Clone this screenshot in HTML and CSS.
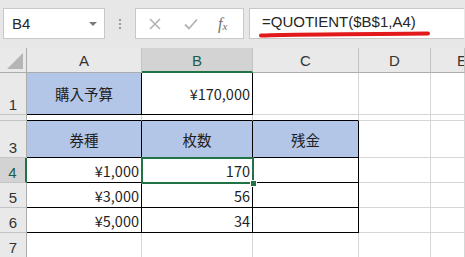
FILE: index.html
```html
<!DOCTYPE html>
<html>
<head>
<meta charset="utf-8">
<link rel="stylesheet" href="styles.css">
</head>
<body>
<div class="toolbar">
  <div class="namebox"><span class="name">B4</span><span class="drop"></span></div>
  <div class="grip"><i></i><i></i><i></i></div>
  <div class="iconbox">
    <svg class="ic" width="14" height="14" viewBox="0 0 14 14"><path d="M2 2L12 12M12 2L2 12" stroke="#b3b3b3" stroke-width="1.6" fill="none"/></svg>
    <svg class="ic" width="16" height="14" viewBox="0 0 16 14"><path d="M2 7.5L6 11.5L14 2.5" stroke="#b3b3b3" stroke-width="1.8" fill="none"/></svg>
    <span class="fx">f<sub>x</sub></span>
  </div>
  <div class="formula">
    <span class="ftext">=QUOTIENT($B$1,A4)</span>
    <svg class="redline" width="175" height="8" viewBox="0 0 175 8"><path d="M3 4.5 C40 3.2, 100 3.0, 170 2.6" stroke="#e31a1c" stroke-width="4" stroke-linecap="round" fill="none"/></svg>
  </div>
</div>
<div class="sheet">
  <div class="grid">
    <div class="hd corner"><span class="tri"></span></div>
    <div class="hd col">A</div>
    <div class="hd col sel-col">B</div>
    <div class="hd col">C</div>
    <div class="hd col">D</div>
    <div class="hd col last">E</div>

    <div class="hd row">1</div>
    <div class="c blue rb bb center">購入予算</div>
    <div class="c rb bb right">¥170,000</div>
    <div class="c"></div>
    <div class="c"></div>
    <div class="c"></div>

    <div class="hd row r2"></div>
    <div class="c bb"></div>
    <div class="c bb"></div>
    <div class="c bb"></div>
    <div class="c"></div>
    <div class="c"></div>

    <div class="hd row">3</div>
    <div class="c blue rb bb center">券種</div>
    <div class="c blue rb bb center">枚数</div>
    <div class="c blue rb bb center">残金</div>
    <div class="c"></div>
    <div class="c"></div>

    <div class="hd row sel-row">4</div>
    <div class="c rb bb right">¥1,000</div>
    <div class="c rb bb right">170</div>
    <div class="c rb bb"></div>
    <div class="c"></div>
    <div class="c"></div>

    <div class="hd row">5</div>
    <div class="c rb bb right">¥3,000</div>
    <div class="c rb bb right">56</div>
    <div class="c rb bb"></div>
    <div class="c"></div>
    <div class="c"></div>

    <div class="hd row">6</div>
    <div class="c rb bb right">¥5,000</div>
    <div class="c rb bb right">34</div>
    <div class="c rb bb"></div>
    <div class="c"></div>
    <div class="c"></div>

    <div class="hd row">7</div>
    <div class="c"></div>
    <div class="c"></div>
    <div class="c"></div>
    <div class="c"></div>
    <div class="c"></div>
  </div>
  <div class="selection"><span class="handle"></span></div>
</div>
</body>
</html>
```
FILE: styles.css
```css
* { box-sizing: border-box; }
html, body {
  margin: 0;
  padding: 0;
  width: 465px;
  height: 257px;
  overflow: hidden;
  background: #ffffff;
  font-family: "Noto Sans CJK JP", "Liberation Sans", sans-serif;
}
.toolbar {
  height: 48px;
  background: #e7e7e7;
  display: flex;
  align-items: flex-start;
  padding: 8px 0 0 3px;
}
.namebox {
  width: 102px;
  height: 31px;
  background: #fff;
  border: 1px solid #c8c8c8;
  display: flex;
  align-items: center;
  justify-content: space-between;
  padding: 0 7px 0 8px;
}
.name {
  font-family: "Liberation Sans", sans-serif;
  font-size: 15px;
  color: #262626;
}
.drop {
  width: 0;
  height: 0;
  border-left: 4px solid transparent;
  border-right: 4px solid transparent;
  border-top: 4px solid #7a7a7a;
  margin-top: 1px;
}
.grip {
  width: 30px;
  height: 31px;
  display: flex;
  flex-direction: column;
  align-items: center;
  justify-content: center;
  gap: 2px;
}
.grip i {
  width: 2px;
  height: 2px;
  background: #9a9a9a;
}
.iconbox {
  width: 109px;
  height: 31px;
  background: #fff;
  border: 1px solid #c8c8c8;
  display: flex;
  align-items: center;
  padding-left: 12px;
  gap: 0;
}
.iconbox .ic:first-child { margin-right: 21px; }
.iconbox .ic:nth-child(2) { margin-right: 19px; }
.fx {
  font-family: "Liberation Serif", serif;
  font-style: italic;
  font-size: 16px;
  color: #6f6f6f;
  line-height: 1;
}
.fx sub {
  font-size: 11px;
  vertical-align: -1px;
}
.formula {
  position: relative;
  margin-left: 5px;
  width: 215px;
  height: 31px;
  background: #fff;
  border: 1px solid #c8c8c8;
  border-right: none;
  padding-left: 12px;
  display: flex;
  align-items: center;
}
.ftext {
  font-family: "Liberation Sans", sans-serif;
  font-size: 15px;
  color: #262626;
  margin-top: -4px;
}
.redline {
  position: absolute;
  left: 8px;
  top: 22px;
}
.sheet {
  position: relative;
}
.grid {
  display: grid;
  grid-template-columns: 27px 115px 111px 106px 72px 34px;
  grid-template-rows: 25px 42px 6px 37px 25px 25px 25px 25px;
}
.hd {
  background: #e9e9e9;
  border-right: 1px solid #c4c4c4;
  border-bottom: 1px solid #c4c4c4;
  color: #333;
  font-family: "Liberation Sans", sans-serif;
  font-size: 15px;
  display: flex;
  overflow: hidden;
}
.col {
  align-items: center;
  justify-content: center;
  border-bottom-color: #acacac;
}
.col.last { justify-content: flex-start; padding-left: 26px; }
.corner {
  position: relative;
  border-bottom-color: #acacac;
  border-right-color: #acacac;
}
.tri {
  position: absolute;
  right: 3px;
  bottom: 3px;
  width: 0;
  height: 0;
  border-left: 16px solid transparent;
  border-bottom: 16px solid #b5b5b5;
}
.row {
  align-items: flex-end;
  justify-content: center;
  padding-bottom: 1px;
  border-right-color: #acacac;
}
.sel-col {
  background: #d3d3d3;
  border-bottom: 2px solid #217346;
  color: #1d5e4a;
  padding-top: 1px;
}
.sel-row {
  background: #d3d3d3;
  border-right: 2px solid #217346;
  color: #1d5e4a;
}
.c {
  border-right: 1px solid #d6d6d6;
  border-bottom: 1px solid #d6d6d6;
  font-size: 14.5px;
  color: #1f1f1f;
  display: flex;
  align-items: center;
  overflow: hidden;
  white-space: nowrap;
}
.blue { background: #b4c6e7; }
.rb { border-right-color: #000; }
.bb { border-bottom-color: #000; }
.center { justify-content: center; }
.right { justify-content: flex-end; padding-right: 2px; }
.selection {
  position: absolute;
  left: 141px;
  top: 109px;
  width: 113px;
  height: 27px;
  border: 2px solid #217346;
  pointer-events: none;
}
.handle {
  position: absolute;
  right: -5px;
  bottom: -5px;
  width: 7px;
  height: 7px;
  background: #217346;
  border: 1px solid #fff;
}
```
